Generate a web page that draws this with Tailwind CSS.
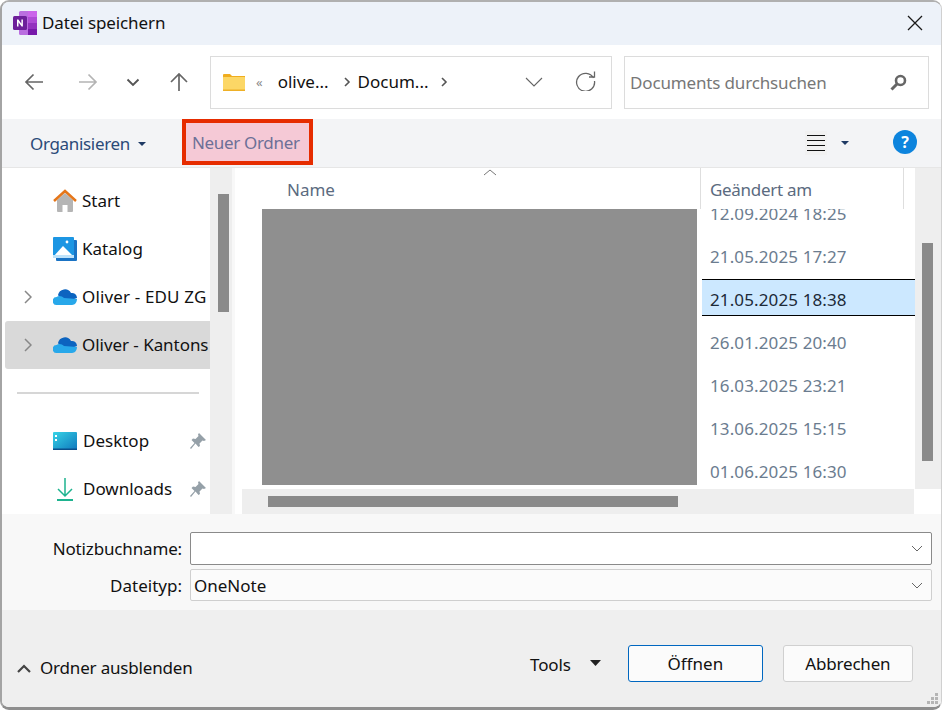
<!DOCTYPE html>
<html lang="de">
<head>
<meta charset="UTF-8">
<title>Datei speichern</title>
<script src="https://cdn.jsdelivr.net/npm/@tailwindcss/browser@4"></script>
</head>
<body class="bg-white">
<div class="w-[942px] h-[711px] overflow-hidden bg-white font-['Noto_Sans',sans-serif] text-[17px] leading-6 text-[#111]">
  <div class="h-[710px] w-[942px] flex flex-col overflow-hidden rounded-[9px] border-t-2 border-l-2 border-b-[3px] border-r border-t-[#b0b0b0] border-l-[#a4a4a4] border-b-[#8e8e8e] border-r-[#d0d0d0]">

    <!-- title bar -->
    <div class="h-[43px] shrink-0 flex items-center bg-[#edf2f9] pl-[11px] pr-[18px] pb-[2px]">
      <svg class="w-6 h-6" viewBox="0 0 24 24">
        <rect x="6" y="0" width="18" height="24" rx="1.5" fill="#ba6ee0"/>
        <rect x="15" y="0" width="9" height="6" fill="#ca64ea"/>
        <rect x="15" y="6" width="9" height="6" fill="#ae4bd5"/>
        <rect x="15" y="12" width="9" height="6" fill="#9332bf"/>
        <rect x="15" y="18" width="9" height="6" fill="#7719aa"/>
        <rect x="0" y="5" width="14" height="14" rx="1.5" fill="#6d1f9a"/>
        <path d="M4 15.500V8.500h1.400l3 4.200V8.500h1.500v7H8.600l-3.100-4.300v4.300z" fill="#fff"/>
      </svg>
      <span class="ml-[5px] tracking-[-0.1px]">Datei speichern</span>
      <svg class="ml-auto w-4 h-4" viewBox="0 0 16 16" fill="none" stroke="#1a1a1a" stroke-width="1.300"><path d="M1 1l14 14M15 1L1 15"/></svg>
    </div>

    <!-- nav bar -->
    <div class="h-[74px] shrink-0 flex items-center bg-white">
      <svg class="ml-[22px] w-5 h-5" viewBox="0 0 20 20" fill="none" stroke="#666" stroke-width="1.700"><path d="M19 10H2M9.500 2.500L2 10l7.500 7.500"/></svg>
      <svg class="ml-[34px] w-5 h-5" viewBox="0 0 20 20" fill="none" stroke="#b4b4b4" stroke-width="1.700"><path d="M1 10h17M10.500 2.500L18 10l-7.500 7.500"/></svg>
      <svg class="ml-[27px] w-4 h-4" viewBox="0 0 16 16" fill="none" stroke="#555" stroke-width="1.900"><path d="M2.500 5.500L8 11l5.500-5.500"/></svg>
      <svg class="ml-[28px] w-5 h-5" viewBox="0 0 20 20" fill="none" stroke="#666" stroke-width="1.700"><path d="M10 19V2M2 10l8-8 8 8"/></svg>
      <div class="ml-[21px] w-[402px] h-[53px] flex items-center border border-[#dcdcdc] pl-[12px]">
        <svg class="w-[22px] h-[18px]" viewBox="0 0 22 18">
          <path d="M0 2a1 1 0 011-1h6l2 2h13v2H0z" fill="#f0ad1e"/>
          <rect x="0" y="4" width="22" height="14" rx="0.500" fill="#fcd766"/>
          <rect x="0" y="16.500" width="22" height="1.500" fill="#eeb027"/>
        </svg>
        <span class="ml-[11px] text-[13px] text-[#8a8a8a] leading-none">«</span>
        <span class="ml-[15px]">olive...</span>
        <svg class="ml-[14px] w-[8px] h-[10px]" viewBox="0 0 8 10" fill="none" stroke="#555" stroke-width="1.600"><path d="M2 1l4 4-4 4"/></svg>
        <span class="ml-[7px]">Docum...</span>
        <svg class="ml-[11px] w-[8px] h-[10px]" viewBox="0 0 8 10" fill="none" stroke="#555" stroke-width="1.600"><path d="M2 1l4 4-4 4"/></svg>
        <svg class="ml-[77px] w-[18px] h-[11px]" viewBox="0 0 18 11" fill="none" stroke="#666" stroke-width="1.100"><path d="M1 1l8 8 8-8"/></svg>
        <svg class="ml-[32px] -mt-[4px] w-[21px] h-[21px]" viewBox="0 0 21 21" fill="none" stroke="#666" stroke-width="1.300"><path d="M18.500 8A9 9 0 1 0 19.500 11M19.500 1.500V7h-5.500"/></svg>
      </div>
      <div class="ml-[12px] w-[305px] h-[53px] flex items-center border border-[#dcdcdc] pl-[5px] pr-[21px] text-[#777]">
        <span class="pt-[1px] tracking-[-0.15px]">Documents durchsuchen</span>
        <svg class="ml-auto w-[17px] h-[17px]" viewBox="0 0 17 17" fill="none" stroke="#666"><circle cx="10.500" cy="6.500" r="4.500" stroke-width="2.600"/><path d="M7 10l-5.500 5.500" stroke-width="3"/></svg>
      </div>
    </div>

    <!-- toolbar -->
    <div class="h-[49px] shrink-0 flex items-start bg-[#f3f4f6] border-b border-[#e6e6e6]">
      <div class="w-[180px] h-[48px] flex items-center pl-[28px] pt-[2px] text-[#2b4a78]">
        <span class="tracking-[-0.33px]">Organisieren</span>
        <svg class="ml-[8px] w-2 h-1" viewBox="0 0 8 4"><path d="M0 0h8L4 4z" fill="#1f3a64"/></svg>
      </div>
      <div class="w-[131px] h-[46px] flex items-center pl-[6px] pt-[1px] border-4 border-[#e62c00] bg-[#f5c9d6] text-[#6d7097] tracking-[-0.33px]">Neuer Ordner</div>
      <div class="ml-[492px] mt-[12px] w-[22px] h-[24px] flex items-center justify-center bg-[#f1f1f1]">
        <svg class="w-[18px] h-[18px]" viewBox="0 0 18 18" stroke="#111"><path d="M0 1.500h18M0 6.500h18M0 11.500h18M0 16.500h18"/></svg>
      </div>
      <svg class="ml-[14px] mt-[22px] w-2 h-1" viewBox="0 0 8 4"><path d="M0 0h8L4 4z" fill="#1f3a64"/></svg>
      <div class="ml-[44px] mt-[11px] w-6 h-6 rounded-full bg-[#0d84dd] text-white text-[16px] font-bold leading-6 text-center">?</div>
    </div>

    <!-- main area -->
    <div class="h-[346px] shrink-0 flex relative overflow-hidden">
      <!-- sidebar -->
      <div class="w-[208px] shrink-0 pt-[9px] pl-[3px] overflow-hidden bg-white">
        <div class="h-12 flex items-center pl-[48px]">
          <svg class="w-6 h-6 shrink-0" viewBox="0 0 24 24">
            <path d="M4 11l8-7 8 7v11a1 1 0 01-1 1h-4.500v-7h-5v7H5a1 1 0 01-1-1z" fill="#b5b5b5"/>
            <path d="M1 12L12 2l11 10" fill="none" stroke="#e5761a" stroke-width="2.500"/>
          </svg>
          <span class="ml-[5px]">Start</span>
        </div>
        <div class="h-12 flex items-center pl-[48px]">
          <svg class="w-6 h-6 shrink-0" viewBox="0 0 24 24">
            <rect x="3" y="3" width="21" height="21" rx="1" fill="#1a73c4"/>
            <rect x="0" y="0" width="21" height="21" rx="1" fill="#1c96e3"/>
            <path d="M0 20l10-11 11 11z" fill="#fff"/>
            <rect x="0" y="18" width="21" height="3" fill="#bfe3fa"/>
            <circle cx="14" cy="5" r="1.400" fill="#fff"/>
          </svg>
          <span class="ml-[5px]">Katalog</span>
        </div>
        <div class="h-12 flex items-center pl-[19px]">
          <svg class="w-[8px] h-[14px] shrink-0" viewBox="0 0 8 14" fill="none" stroke="#888" stroke-width="1.500"><path d="M1 1l6 6-6 6"/></svg>
          <svg class="ml-[21px] w-6 h-4 shrink-0" viewBox="0 0 24 16">
            <path d="M5 6a7 7 0 0113-2 5 5 0 016 5l-14 5z" fill="#0c64c0"/>
            <path d="M4 16a4 4 0 01-.500-8C6 6 9 7 11 9l13 1c0 3-2 6-5 6z" fill="#28a8ea"/>
          </svg>
          <span class="ml-[5px] whitespace-nowrap tracking-[0.15px]">Oliver - EDU ZG</span>
        </div>
        <div class="h-12 flex items-center pl-[19px] bg-[#d9d9d9] rounded-l-[3px] whitespace-nowrap overflow-hidden">
          <svg class="w-[8px] h-[14px] shrink-0" viewBox="0 0 8 14" fill="none" stroke="#888" stroke-width="1.500"><path d="M1 1l6 6-6 6"/></svg>
          <svg class="ml-[21px] w-6 h-4 shrink-0" viewBox="0 0 24 16">
            <path d="M5 6a7 7 0 0113-2 5 5 0 016 5l-14 5z" fill="#0c64c0"/>
            <path d="M4 16a4 4 0 01-.500-8C6 6 9 7 11 9l13 1c0 3-2 6-5 6z" fill="#28a8ea"/>
          </svg>
          <span class="ml-[5px] tracking-[-0.05px]">Oliver - Kantons</span>
        </div>
        <div class="mt-[23px] ml-[12px] w-[182px] h-[2px] bg-[#d6d6d6]"></div>
        <div class="mt-[23px] h-12 flex items-center pl-[48px]">
          <svg class="w-6 h-[18px] shrink-0" viewBox="0 0 24 18">
            <defs><linearGradient id="desk" x1="0" y1="0" x2="1" y2="1"><stop offset="0" stop-color="#36d3e6"/><stop offset="1" stop-color="#0f78bd"/></linearGradient></defs>
            <rect width="24" height="18" rx="1" fill="url(#desk)"/>
            <rect x="2" y="3" width="2" height="2" fill="#fff"/>
            <rect x="2" y="7" width="2" height="2" fill="#fff"/>
            <rect y="16.500" width="24" height="1.500" fill="#0a4f8c"/>
          </svg>
          <span class="ml-[6px]">Desktop</span>
          <svg class="ml-auto mr-[4px] w-4 h-4" viewBox="0 0 16 16"><path d="M9 0l7 7-2 1-1.500-.500L9.500 10.500 10 13l-1.500 1-3-3.500L1 16l-1-1 4.500-5L1.500 7 3 5.500l2.500.500 3-3L8 1.500z" fill="#95a0a8"/></svg>
        </div>
        <div class="h-12 flex items-center pl-[48px]">
          <svg class="w-6 h-6 shrink-0" viewBox="0 0 24 24" fill="none" stroke="#1eb38f" stroke-width="1.500"><path d="M12 1v18M5 12l7 7 7-7"/><path d="M4 23h16" stroke-width="2"/></svg>
          <span class="ml-[6px]">Downloads</span>
          <svg class="ml-auto mr-[4px] w-4 h-4" viewBox="0 0 16 16"><path d="M9 0l7 7-2 1-1.500-.500L9.500 10.500 10 13l-1.500 1-3-3.500L1 16l-1-1 4.500-5L1.500 7 3 5.500l2.500.500 3-3L8 1.500z" fill="#95a0a8"/></svg>
        </div>
      </div>
      <!-- sidebar scrollbar -->
      <div class="w-[25px] shrink-0 bg-[#eeeeee] border-r-[3px] border-r-[#f8f8f8] pt-[26px] pl-[8px]">
        <div class="w-[11px] h-[118px] bg-[#8a8a8a]"></div>
      </div>
      <div class="w-[7px] shrink-0 bg-white"></div>

      <!-- file list -->
      <div class="flex-1 flex flex-col min-w-0">
        <div class="flex-1 flex min-h-0">
          <div class="flex-1 flex flex-col min-w-0 overflow-hidden">
            <div class="h-[41px] shrink-0 flex relative z-10 bg-white text-[#5b6b80]">
              <span class="pl-[45px] pt-[10px] w-[459px] border-r border-[#dedede]">Name</span>
              <span class="pl-[9px] pt-[10px] w-[203px] border-r border-[#dedede] tracking-[-0.3px]">Geändert am</span>
              <svg class="absolute left-[241px] top-[1px] w-[14px] h-[7px]" viewBox="0 0 14 7" fill="none" stroke="#777"><path d="M1 6l6-5 6 5"/></svg>
            </div>
            <div class="flex-1 -mt-[17px] pl-[468px] text-[#6b7c8f] tracking-[0.12px] bg-white">
              <div class="h-[43px] flex items-center">12.09.2024 18:25</div>
              <div class="h-[43px] flex items-center">21.05.2025 17:27</div>
              <div class="h-[37px] mt-[1px] mb-[5px] pt-[4px] flex items-center bg-[#cce8ff] border-y border-black text-[#1c2a38] -ml-[8px] pl-[8px]">21.05.2025 18:38</div>
              <div class="h-[43px] flex items-center">26.01.2025 20:40</div>
              <div class="h-[43px] flex items-center">16.03.2025 23:21</div>
              <div class="h-[43px] flex items-center">13.06.2025 15:15</div>
              <div class="h-[43px] flex items-center">01.06.2025 16:30</div>
            </div>
          </div>
          <div class="w-[26px] shrink-0 bg-[#eeeeee] pt-[75px] pl-[7px]">
            <div class="w-[11px] h-[218px] bg-[#8a8a8a]"></div>
          </div>
        </div>
        <div class="h-[25px] shrink-0 flex bg-white">
          <div class="w-[672px] bg-[#eeeeee] pt-[7px] pl-[26px]"><div class="w-[410px] h-[11px] bg-[#8a8a8a]"></div></div>
        </div>
      </div>

      <!-- blurred file names -->
      <div class="absolute z-20 left-[260px] top-[41px] w-[435px] h-[276px] bg-[#8f8f8f]"></div>
    </div>

    <!-- form -->
    <div class="h-[96px] shrink-0 bg-[#f8f8f8] pt-[18px] pr-[9px]">
      <div class="flex items-center h-[33px]">
        <label class="w-[180px] pt-[1px] text-right tracking-[-0.15px]">Notizbuchname:</label>
        <div class="ml-[8px] flex-1 h-[33px] flex items-center justify-end bg-white border border-[#8a8a8a] rounded-[2px] pr-[8px]">
          <svg class="w-[12px] h-[7px]" viewBox="0 0 12 7" fill="none" stroke="#666"><path d="M1 1l5 5 5-5"/></svg>
        </div>
      </div>
      <div class="mt-[4px] flex items-center h-[32px]">
        <label class="w-[180px] text-right pt-[1px]">Dateityp:</label>
        <div class="ml-[8px] flex-1 h-[32px] flex items-center justify-between bg-[#fbfbfb] border border-[#cfcfcf] rounded-[2px] pl-[3px] pr-[8px]">
          <span class="pt-[1px]">OneNote</span>
          <svg class="w-[12px] h-[7px]" viewBox="0 0 12 7" fill="none" stroke="#666"><path d="M1 1l5 5 5-5"/></svg>
        </div>
      </div>
    </div>

    <!-- footer -->
    <div class="flex-1 flex bg-[#efefef] relative pt-[35px]">
      <svg class="ml-[15px] mt-[19px] w-[14px] h-[9px]" viewBox="0 0 14 9" fill="none" stroke="#444" stroke-width="2.200"><path d="M1 8l6-6 6 6"/></svg>
      <span class="w-[152px] ml-[9px] mt-[11px] whitespace-nowrap tracking-[-0.18px]">Ordner ausblenden</span>
      <span class="ml-[338px] mt-[8px] tracking-[-0.1px]">Tools</span>
      <svg class="ml-[19px] mt-[15px] w-[11px] h-[6px]" viewBox="0 0 11 6"><path d="M0 0h11L5.500 6z" fill="#222"/></svg>
      <button class="ml-[27px] w-[135px] h-[37px] pt-[1px] bg-[#fbfbfb] border border-[#0067c0] rounded-[3px]">Öffnen</button>
      <button class="ml-[20px] w-[130px] h-[37px] pt-[1px] bg-[#fbfbfb] border border-[#d0d0d0] rounded-[3px] tracking-[-0.2px]">Abbrechen</button>
      <svg class="absolute right-[2px] bottom-[2px] w-3 h-3" viewBox="0 0 12 12" fill="#b5b5b5"><rect x="8" y="0" width="3" height="3"/><rect x="4" y="4" width="3" height="3"/><rect x="8" y="4" width="3" height="3"/><rect x="0" y="8" width="3" height="3"/><rect x="4" y="8" width="3" height="3"/><rect x="8" y="8" width="3" height="3"/></svg>
    </div>
  </div>
</div>
</body>
</html>
